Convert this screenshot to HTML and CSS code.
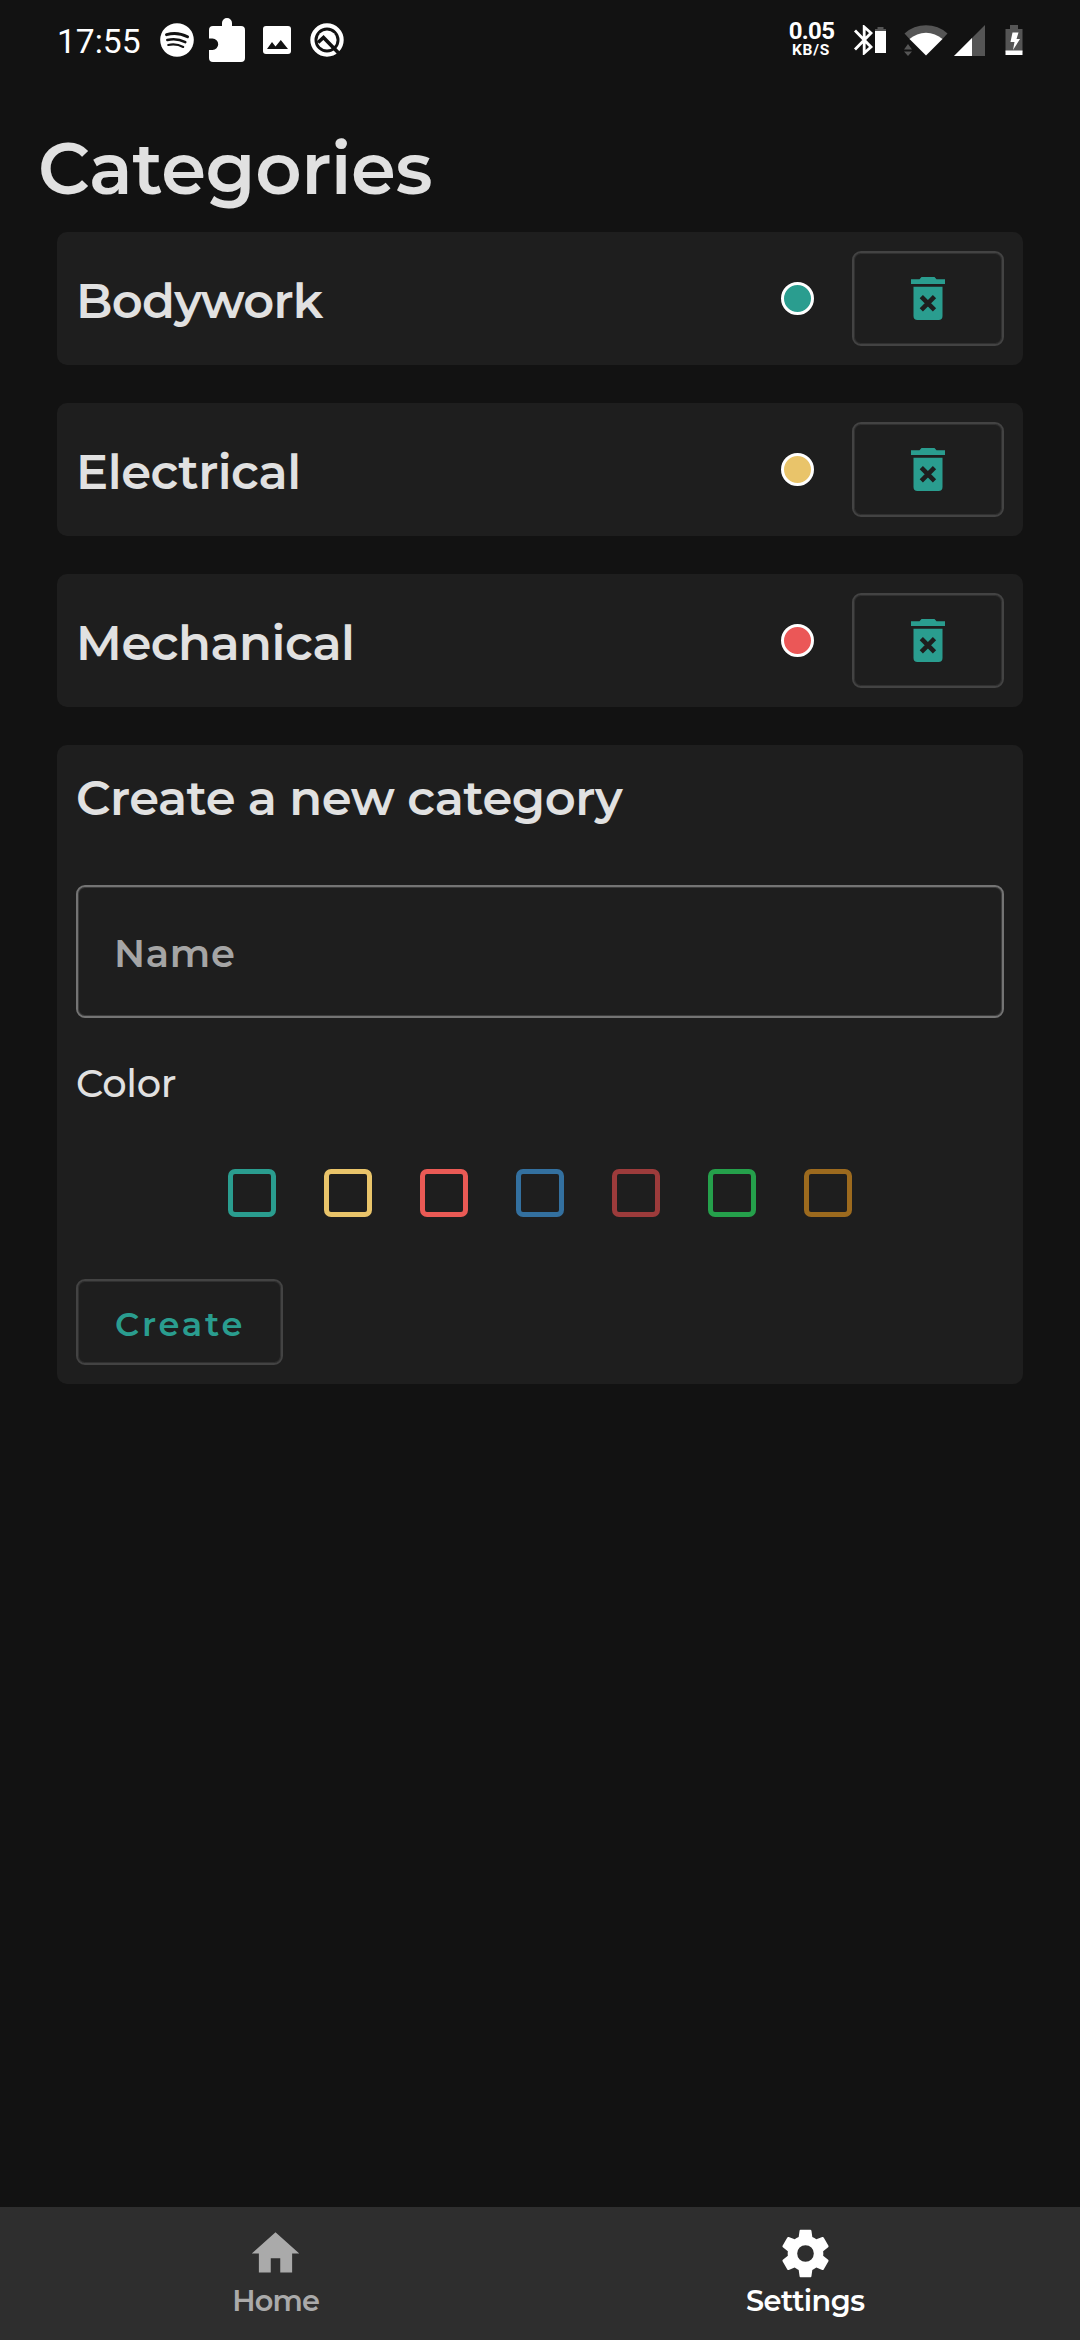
FILE: index.html
```html
<!DOCTYPE html>
<html lang="en">
<head>
<meta charset="utf-8">
<title>Categories</title>
<link rel="stylesheet" href="styles.css">
</head>
<body>
<div class="app">
  <header class="status">
    <span class="clock">17:55</span>
    <svg class="ic-spotify" width="34" height="34" viewBox="0 0 34 34"><circle cx="17" cy="17" r="16.8" fill="#fff"/><g fill="none" stroke="#121212" stroke-linecap="round"><path d="M6.500 11.600c7-2 14.500-1.300 21 2.200" stroke-width="3"/><path d="M7.300 17c6-1.600 12.200-.9 18 2.200" stroke-width="2.500"/><path d="M8.200 22c5.200-1.200 10.200-.6 15 2" stroke-width="2.100"/></g></svg>
    <svg class="ic-puzzle" width="36" height="44" viewBox="0 0 36 44"><path fill="#fff" d="M4 8h9V5a5 5 0 0 1 10 0v3h9a4 4 0 0 1 4 4v28a4 4 0 0 1-4 4H4a4 4 0 0 1-4-4v-8h3.500a5.700 5.700 0 0 0 0-11.400H0V12a4 4 0 0 1 4-4z"/></svg>
    <svg class="ic-image" width="28" height="28" viewBox="0 0 28 28"><rect width="28" height="28" rx="3" fill="#fff"/><path fill="#121212" d="M4 23l5-7 3.500 4.500 5.300-6.500L25 23z"/></svg>
    <svg class="ic-q" width="34" height="34" viewBox="0 0 34 34"><circle cx="17" cy="17" r="14.600" fill="none" stroke="#fff" stroke-width="4.200"/><circle cx="17" cy="17" r="9.600" fill="#fff"/><path d="M8 19.500l5.500-5L30 31.500" fill="none" stroke="#121212" stroke-width="3.600"/></svg>
    <div class="net"><span class="rate">0.05</span><span class="unit">KB/S</span></div>
    <svg class="ic-bt" width="33" height="30" viewBox="0 0 33 30"><path d="M2 5.500L18 22l-6.800 6V2L18 8 2 24.500" fill="none" stroke="#fff" stroke-width="2.800"/><path d="M24.500 2h6v2H33v3H22V4h2.500z" fill="#555"/><path d="M22 6h11v22H22z" fill="#fff"/></svg>
    <svg class="ic-wifi" width="45" height="32" viewBox="0 0 45 32"><path d="M1 25.500L5 20l4 5.500zM1 27.500h8L5 32z" fill="#555"/><path d="M1.500 9.500a32 32 0 0 1 43 0L39 15.500H7z" fill="#555"/><path d="M23 31.500L6.500 15a25 25 0 0 1 33 0z" fill="#fff"/></svg>
    <svg class="ic-signal" width="31" height="31" viewBox="0 0 31 31"><path d="M31 0v31H0z" fill="#555"/><path d="M18 13v18H0z" fill="#fff"/></svg>
    <svg class="ic-batt" width="18" height="32" viewBox="0 0 18 32"><path d="M5 1h8v4h4.500v23H.5V5H5z" fill="#555"/><path d="M.5 26.500h17V31H.5z" fill="#fff"/><path d="M7.500 8.500h6l-2 6.500h3.500L8 26l1.500-8H5.500z" fill="#fff"/></svg>
  </header>

  <h1 class="title">Categories</h1>

  <main class="cards">
    <section class="card row">
      <h2 class="name tight">Bodywork</h2>
      <i class="dot teal"></i>
      <button class="del" aria-label="Delete"><svg width="34" height="43" viewBox="0 0 34 43"><path d="M0 2.300h8.500L10.500 0h13l2 2.300H34V7H0zM2.500 9.700h29V39a4 4 0 0 1-4 4h-21a4 4 0 0 1-4-4z" fill="#2a9d8f"/><path d="M10.300 19.700l13.200 13.200M23.500 19.700L10.300 32.900" stroke="#1e1e1e" stroke-width="4.600"/></svg></button>
    </section>
    <section class="card row">
      <h2 class="name">Electrical</h2>
      <i class="dot yellow"></i>
      <button class="del" aria-label="Delete"><svg width="34" height="43" viewBox="0 0 34 43"><path d="M0 2.300h8.500L10.500 0h13l2 2.300H34V7H0zM2.500 9.700h29V39a4 4 0 0 1-4 4h-21a4 4 0 0 1-4-4z" fill="#2a9d8f"/><path d="M10.300 19.700l13.200 13.200M23.500 19.700L10.300 32.900" stroke="#1e1e1e" stroke-width="4.600"/></svg></button>
    </section>
    <section class="card row">
      <h2 class="name">Mechanical</h2>
      <i class="dot red"></i>
      <button class="del" aria-label="Delete"><svg width="34" height="43" viewBox="0 0 34 43"><path d="M0 2.300h8.500L10.500 0h13l2 2.300H34V7H0zM2.500 9.700h29V39a4 4 0 0 1-4 4h-21a4 4 0 0 1-4-4z" fill="#2a9d8f"/><path d="M10.300 19.700l13.200 13.200M23.500 19.700L10.300 32.900" stroke="#1e1e1e" stroke-width="4.600"/></svg></button>
    </section>
    <section class="card form">
      <h2 class="form-title">Create a new category</h2>
      <div class="field">Name</div>
      <div class="label">Color</div>
      <div class="swatches">
        <i class="sw s1"></i><i class="sw s2"></i><i class="sw s3"></i><i class="sw s4"></i><i class="sw s5"></i><i class="sw s6"></i><i class="sw s7"></i>
      </div>
      <button class="create">Create</button>
    </section>
  </main>

  <nav class="nav">
    <a class="tab home"><svg width="57" height="57" viewBox="0 0 24 24"><path fill="#aaa" d="M10 20v-6h4v6h5v-8h3L12 3 2 12h3v8z"/></svg><span>Home</span></a>
    <a class="tab on"><svg width="57" height="57" viewBox="0 0 24 24"><path fill="#fff" d="M12 15.500A3.500 3.500 0 0 1 8.500 12 3.500 3.500 0 0 1 12 8.500a3.500 3.500 0 0 1 3.500 3.500 3.500 3.500 0 0 1-3.500 3.500m7.430-2.530c.04-.32.070-.64.070-.97s-.03-.66-.07-1l2.110-1.630c.19-.15.240-.42.120-.64l-2-3.460c-.12-.22-.39-.31-.61-.22l-2.490 1c-.52-.39-1.060-.73-1.690-.98l-.37-2.650A.506.506 0 0 0 14 2h-4c-.25 0-.46.180-.5.420l-.37 2.650c-.63.250-1.170.59-1.690.98l-2.490-1c-.22-.09-.49 0-.61.220l-2 3.460c-.13.220-.07.49.120.64L4.570 11c-.04.340-.07.670-.07 1s.03.650.07.970l-2.110 1.660c-.19.150-.25.420-.12.640l2 3.460c.12.220.39.300.61.220l2.490-1.010c.52.400 1.060.740 1.690.990l.37 2.650c.04.240.25.420.5.420h4c.25 0 .46-.18.500-.42l.37-2.650c.63-.26 1.170-.59 1.690-.99l2.490 1.010c.22.080.49 0 .61-.22l2-3.460c.12-.22.070-.49-.12-.64z"/></svg><span>Settings</span></a>
  </nav>
</div>
</body>
</html>
```
FILE: styles.css
```css
* { box-sizing: border-box; margin: 0; padding: 0; }
body { background: #121212; font-family: "Montserrat", "Inter", sans-serif; color: #e1e1e1; }
svg { display: block; flex: none; }
.app { width: 1080px; height: 2340px; display: flex; flex-direction: column; }

.status { height: 80px; display: flex; align-items: center; padding-left: 57px; color: #fff; font-family: Roboto, sans-serif; }
.clock { width: 103px; font-size: 33.6px; line-height: 40px; padding-top: 3px; }
.ic-puzzle { margin-left: 15px; }
.ic-image { margin-left: 18px; }
.ic-q { margin-left: 19px; }
.net { margin-left: 439px; margin-bottom: 2px; width: 56px; display: flex; flex-direction: column; align-items: center; font-weight: 700; }
.rate { font-size: 24px; line-height: 22px; letter-spacing: -.7px; padding-left: 1px; }
.unit { font-size: 15.5px; line-height: 16px; letter-spacing: .8px; }
.ic-bt { margin-left: 14px; }
.ic-wifi { margin-left: 17px; }
.ic-signal { margin-left: 6px; }
.ic-batt { margin-left: 20px; }

.title { height: 132px; padding: 44px 0 0 38px; font-size: 72px; line-height: 88px; font-weight: 600; letter-spacing: -.38px; }
.cards { display: flex; flex-direction: column; gap: 38px; margin: 20px 57px 0; flex: 1; }
.card { background: #1e1e1e; border-radius: 10px; }
.row { height: 133px; display: flex; align-items: center; padding: 0 19px; }
.name { flex: 1; font-size: 48px; font-weight: 600; line-height: 60px; letter-spacing: -.45px; padding-top: 5px; }
.tight { letter-spacing: -.75px; }
.dot { width: 33px; height: 33px; border: 3px solid #fff; border-radius: 50%; margin-right: 38px; }
.teal { background: #2a9d8f; }
.yellow { background: #e9c46a; }
.red { background: #eb5757; }
button { background: none; border: 2px solid #434343; box-shadow: inset 0 0 0 1px #303030; border-radius: 9px; font: inherit; }
.del { width: 152px; height: 95px; display: flex; align-items: center; justify-content: center; }

.form { height: 639px; padding: 23px 19px 0; display: flex; flex-direction: column; }
.form-title { font-size: 48px; font-weight: 600; line-height: 60px; letter-spacing: -.45px; }
.field { margin-top: 57px; height: 133px; border: 2px solid #747474; box-shadow: inset 0 0 0 1px #3c3c3c; border-radius: 9px; display: flex; align-items: center; padding: 4px 0 0 36px; font-size: 38.4px; font-weight: 600; letter-spacing: .7px; color: #a5a5a5; }
.label { margin-top: 42px; font-size: 38.4px; font-weight: 500; line-height: 47px; letter-spacing: -.3px; }
.swatches { margin-top: 62px; display: flex; justify-content: center; gap: 48px; }
.sw { width: 48px; height: 48px; border: 5px solid; border-radius: 7px; }
.s1 { color: #2a9d8f; }
.s2 { color: #e9c46a; }
.s3 { color: #ea5a55; }
.s4 { color: #33709f; }
.s5 { color: #9c3b3b; }
.s6 { color: #25a04b; }
.s7 { color: #9c6a1e; }
.create { margin-top: 62px; width: 207px; height: 86px; font-size: 33.6px; font-weight: 600; letter-spacing: 2.85px; color: #2a9d8f; text-align: left; padding: 2px 0 0 37px; }

.nav { height: 133px; background: #2e2e2e; display: flex; padding: 18px 10px 0 11px; font-size: 28.8px; font-weight: 600; line-height: 35px; letter-spacing: -.55px; color: #aaa; }
.tab { flex: 1; display: flex; flex-direction: column; align-items: center; gap: 1px; }
.home { letter-spacing: -.8px; }
.on { color: #fff; }
```
